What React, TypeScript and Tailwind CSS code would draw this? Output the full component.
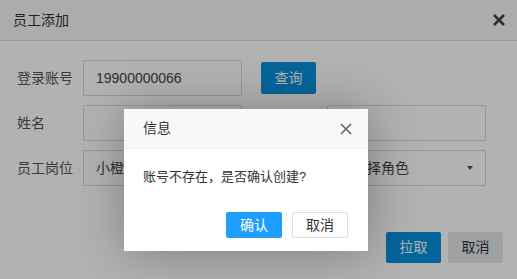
import React from "react";

const font = "font-['Liberation_Sans','Noto_Sans_CJK_SC',sans-serif]";

function XIcon({ size, stroke, color }: { size: number; stroke: number; color: string }) {
  return (
    <svg width={size} height={size} viewBox="0 0 12 12" fill="none">
      <path d="M1 1L11 11M11 1L1 11" stroke={color} strokeWidth={stroke} strokeLinecap="butt" />
    </svg>
  );
}

export default function App() {
  return (
    <div className={`relative w-[517px] h-[279px] overflow-hidden bg-white ${font}`}>
      {/* page */}
      <div className="flex items-center justify-between h-[41px] border-b border-[#dcdcdc] bg-[#f7f7f7] pl-[13px] pr-[12px]">
        <span className="text-[14px] text-[#333]">员工添加</span>
        <XIcon size={12} stroke={2.6} color="#444" />
      </div>
      <div className="pt-[19px] pl-[17px] pr-[31px]">
        <div className="flex items-center h-[36px]">
          <span className="w-[66px] text-[14px] text-[#555]">登录账号</span>
          <div className="w-[159px] h-[36px] border border-[#d6d6d6] rounded-[2px] flex items-center pl-[12px] text-[14px] text-[#444]">19900000066</div>
          <button className="ml-[19px] w-[55px] h-[32px] rounded-[2px] bg-[#0891dd] text-white text-[14px]">查询</button>
        </div>
        <div className="flex items-center h-[36px] mt-[9px]">
          <span className="w-[66px] text-[14px] text-[#555]">姓名</span>
          <div className="w-[159px] h-[36px] border border-[#d6d6d6] rounded-[2px]" />
          <span className="w-[85px]" />
          <div className="w-[159px] h-[36px] border border-[#d6d6d6] rounded-[2px]" />
        </div>
        <div className="flex items-center h-[36px] mt-[9px]">
          <span className="w-[66px] text-[14px] text-[#555]">员工岗位</span>
          <div className="w-[159px] h-[36px] border border-[#d6d6d6] rounded-[2px] flex items-center pl-[12px] text-[14px] text-[#444]">小橙渠道</div>
          <span className="w-[85px]" />
          <div className="w-[159px] h-[36px] border border-[#d6d6d6] rounded-[2px] flex items-center justify-between pl-[11px] pr-[12px] text-[14px] text-[#444]">
            <span>请选择角色</span>
            <span className="w-0 h-0 border-l-[3.5px] border-r-[3.5px] border-t-[4px] border-l-transparent border-r-transparent border-t-[#555]" />
          </div>
        </div>
        <div className="flex justify-end gap-[7px] mt-[46px] -mr-[17px]">
          <button className="w-[55px] h-[31px] rounded-[2px] bg-[#0891dd] text-white text-[14px]">拉取</button>
          <button className="w-[55px] h-[31px] rounded-[2px] bg-[#e4e8ec] text-[#333] text-[14px]">取消</button>
        </div>
      </div>

      {/* overlay */}
      <div className="absolute inset-0 bg-black/30" />

      {/* dialog */}
      <div className="absolute left-[124px] top-[109px] w-[244px] h-[142px] bg-white shadow-[1px_1px_50px_rgba(0,0,0,0.3)] flex flex-col">
        <div className="h-[40px] bg-[#f8f8f8] border-b border-[#eeeeee] flex items-center justify-between pl-[19px] pr-[16px]">
          <span className="text-[14px] text-[#333]">信息</span>
          <XIcon size={12} stroke={1.6} color="#666" />
        </div>
        <div className="pt-[18px] pl-[19px] text-[13px] leading-[20px] text-[#333]">账号不存在，是否确认创建?</div>
        <div className="flex justify-end gap-[10px] pr-[20px] mt-[25px]">
          <button className="w-[56px] h-[26px] rounded-[2px] bg-[#1e9fff] text-white text-[14px] leading-[26px]">确认</button>
          <button className="w-[56px] h-[26px] rounded-[2px] bg-white border border-[#dedede] text-[#333] text-[14px] leading-[24px]">取消</button>
        </div>
      </div>
    </div>
  );
}
